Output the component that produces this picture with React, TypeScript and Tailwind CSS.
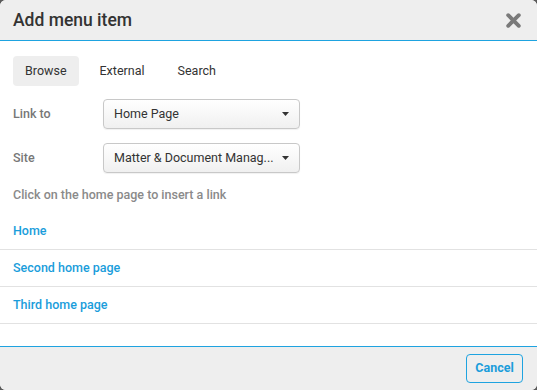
import React from "react";

function Caret() {
  return (
    <svg width="7" height="4" viewBox="0 0 7 4" className="shrink-0">
      <path d="M0 0 L7 0 L3.5 4 Z" fill="#333" />
    </svg>
  );
}

function Select({ value }: { value: string }) {
  return (
    <div className="w-[197px] h-[30px] flex items-center justify-between gap-[8px] pl-[10px] pr-[10px] border border-[#c8c8c8] rounded-[4px] bg-gradient-to-b from-white to-[#f0f0f0] shadow-[0_1px_1px_rgba(0,0,0,0.06)]">
      <span className="text-[12.5px] text-[#333] whitespace-nowrap">{value}</span>
      <Caret />
    </div>
  );
}

export default function App() {
  return (
    <div className="w-[537px] h-[390px] bg-[#5a5a5a]" style={{ fontFamily: "Roboto, 'Noto Sans', sans-serif" }}>
      <div className="w-full h-full flex flex-col rounded-[6px] overflow-hidden bg-white">
        <div className="h-[41px] shrink-0 flex items-center justify-between pl-[13px] pr-[15px] bg-[#eeeeee] border-b border-[#1ea3e0]">
          <span className="text-[17.5px] font-medium text-[#333]">Add menu item</span>
          <svg width="17" height="17" viewBox="0 0 16 16">
            <path d="M3 3 L13 13 M13 3 L3 13" stroke="#7a7a7a" strokeWidth="3.6" strokeLinecap="round" />
          </svg>
        </div>
        <div className="flex-1 flex flex-col pt-[15px]">
          <div className="flex items-center gap-[9px] px-[13px]">
            <div className="h-[30px] px-[12px] flex items-center rounded-[4px] bg-[#eeeeee] text-[12.5px] text-[#333]">Browse</div>
            <div className="h-[30px] px-[12px] flex items-center text-[12.5px] text-[#333]">External</div>
            <div className="h-[30px] px-[12px] flex items-center text-[12.5px] text-[#333]">Search</div>
          </div>
          <div className="flex flex-col gap-[14px] mt-[13px] px-[13px]">
            <div className="flex items-center">
              <span className="w-[90px] text-[12.5px] font-medium text-[#777]">Link to</span>
              <Select value="Home Page" />
            </div>
            <div className="flex items-center">
              <span className="w-[90px] text-[12.5px] font-medium text-[#777]">Site</span>
              <Select value="Matter & Document Manag..." />
            </div>
          </div>
          <div className="px-[13px] mt-[13px] h-[18px] flex items-center text-[12.5px] font-medium text-[#8a8a8a]">
            Click on the home page to insert a link
          </div>
          <div className="mt-[9px] flex flex-col">
            {["Home", "Second home page", "Third home page"].map((t) => (
              <div key={t} className="h-[37px] flex items-center px-[13px] border-b border-[#e2e2e2] text-[12.5px] font-medium text-[#1a9ddb]">
                {t}
              </div>
            ))}
          </div>
        </div>
        <div className="h-[44px] shrink-0 flex items-center justify-end pr-[14px] bg-[#eeeeee] border-t border-[#1ea3e0]">
          <div className="h-[29px] w-[57px] flex items-center justify-center rounded-[4px] border border-[#1ea3e0] text-[12.5px] font-bold text-[#1a9ddb]">
            Cancel
          </div>
        </div>
      </div>
    </div>
  );
}
